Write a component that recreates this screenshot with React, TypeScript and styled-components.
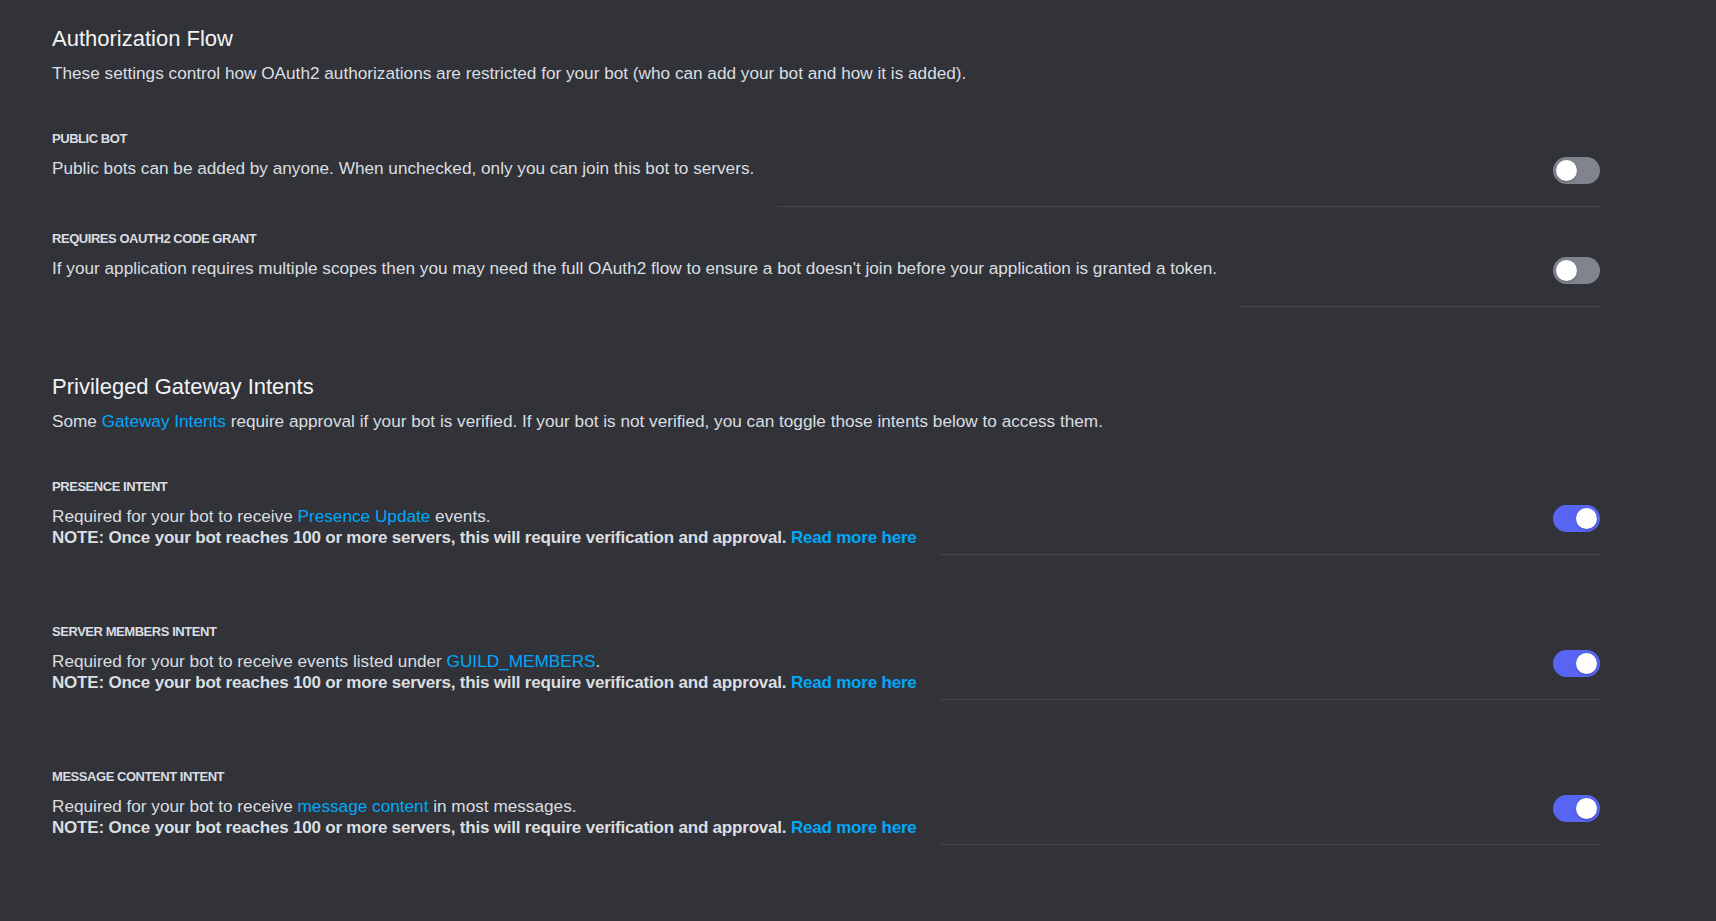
import React from "react";
import styled, { createGlobalStyle } from "styled-components";

const GlobalStyle = createGlobalStyle`
  html, body {
    margin: 0;
    padding: 0;
    background: #313338;
  }
  body {
    font-family: "Liberation Sans", Arial, sans-serif;
    color: #dbdee1;
    -webkit-font-smoothing: antialiased;
  }
`;

const Page = styled.main`
  min-height: 921px;
  box-sizing: border-box;
  padding: 25px 116px 0 52px;
  background: #313338;
`;

const Section = styled.section<{ $spaceAfter: number }>`
  display: flex;
  flex-direction: column;
  margin-bottom: ${(p) => p.$spaceAfter}px;
`;

const SectionTitle = styled.h2`
  margin: 0 0 9px;
  font-size: 22px;
  line-height: 28px;
  font-weight: 400;
  color: #f2f3f5;
`;

const SectionDescription = styled.p`
  margin: 0;
  font-size: 17.2px;
  line-height: 22px;
  color: #dbdee1;
`;

const SettingsList = styled.div<{ $gap: number }>`
  display: flex;
  flex-direction: column;
  gap: ${(p) => p.$gap}px;
  margin-top: 47px;
`;

const Setting = styled.div`
  display: flex;
  flex-direction: column;
`;

const SettingLabel = styled.h3`
  margin: 0 0 10px;
  font-size: 13px;
  line-height: 16px;
  font-weight: 700;
  letter-spacing: -0.45px;
  text-transform: uppercase;
  color: #dbdee1;
`;

const SettingRow = styled.div`
  display: flex;
  align-items: flex-start;
`;

const SettingText = styled.div`
  flex: none;
  font-size: 17.2px;
  line-height: 22px;
  color: #dbdee1;
`;

const Note = styled.strong`
  display: block;
  font-size: 17px;
  font-weight: 700;
  letter-spacing: -0.2px;
  color: #dbdee1;
`;

const Link = styled.a<{ $bold?: boolean }>`
  color: #00a8fc;
  text-decoration: none;
  font-weight: ${(p) => (p.$bold ? 700 : 400)};
  cursor: pointer;
`;

const SettingControl = styled.div`
  flex: 1;
  display: flex;
  justify-content: flex-end;
  margin-left: 23px;
  padding-bottom: 22px;
  border-bottom: 1px solid #44464c;
`;

const ToggleTrack = styled.button<{ $on: boolean }>`
  display: flex;
  align-items: center;
  justify-content: ${(p) => (p.$on ? "flex-end" : "flex-start")};
  box-sizing: border-box;
  width: 47px;
  height: 27px;
  padding: 0 3px;
  border: none;
  border-radius: 14px;
  background: ${(p) => (p.$on ? "#5865f2" : "#80848e")};
  cursor: pointer;
`;

const ToggleKnob = styled.span`
  display: block;
  width: 21px;
  height: 21px;
  border-radius: 50%;
  background: #ffffff;
  box-shadow: 0 1px 2px rgba(0, 0, 0, 0.25);
`;

const Toggle = ({ on }: { on: boolean }) => (
  <ToggleTrack $on={on} role="switch" aria-checked={on}>
    <ToggleKnob />
  </ToggleTrack>
);

const NoteLine = () => (
  <Note>
    NOTE: Once your bot reaches 100 or more servers, this will require verification and approval.{" "}
    <Link $bold>Read more here</Link>
  </Note>
);

type Item = { label: string; on: boolean; body: React.ReactNode };

const authItems: Item[] = [
  {
    label: "Public Bot",
    on: false,
    body: "Public bots can be added by anyone. When unchecked, only you can join this bot to servers.",
  },
  {
    label: "Requires OAuth2 Code Grant",
    on: false,
    body:
      "If your application requires multiple scopes then you may need the full OAuth2 flow to ensure a bot doesn't join before your application is granted a token.",
  },
];

const intentItems: Item[] = [
  {
    label: "Presence Intent",
    on: true,
    body: (
      <>
        Required for your bot to receive <Link>Presence Update</Link> events.
        <NoteLine />
      </>
    ),
  },
  {
    label: "Server Members Intent",
    on: true,
    body: (
      <>
        Required for your bot to receive events listed under <Link>GUILD_MEMBERS</Link>.
        <NoteLine />
      </>
    ),
  },
  {
    label: "Message Content Intent",
    on: true,
    body: (
      <>
        Required for your bot to receive <Link>message content</Link> in most messages.
        <NoteLine />
      </>
    ),
  },
];

const SettingItem = ({ item }: { item: Item }) => (
  <Setting>
    <SettingLabel>{item.label}</SettingLabel>
    <SettingRow>
      <SettingText>{item.body}</SettingText>
      <SettingControl>
        <Toggle on={item.on} />
      </SettingControl>
    </SettingRow>
  </Setting>
);

export default function App() {
  return (
    <>
      <GlobalStyle />
      <Page>
        <Section $spaceAfter={66}>
          <SectionTitle>Authorization Flow</SectionTitle>
          <SectionDescription>
            These settings control how OAuth2 authorizations are restricted for your bot (who can add your bot and how it is added).
          </SectionDescription>
          <SettingsList $gap={24}>
            {authItems.map((it) => (
              <SettingItem key={it.label} item={it} />
            ))}
          </SettingsList>
        </Section>
        <Section $spaceAfter={0}>
          <SectionTitle>Privileged Gateway Intents</SectionTitle>
          <SectionDescription>
            Some <Link>Gateway Intents</Link> require approval if your bot is verified. If your bot is not verified, you can toggle those intents below to access them.
          </SectionDescription>
          <SettingsList $gap={69}>
            {intentItems.map((it) => (
              <SettingItem key={it.label} item={it} />
            ))}
          </SettingsList>
        </Section>
      </Page>
    </>
  );
}
